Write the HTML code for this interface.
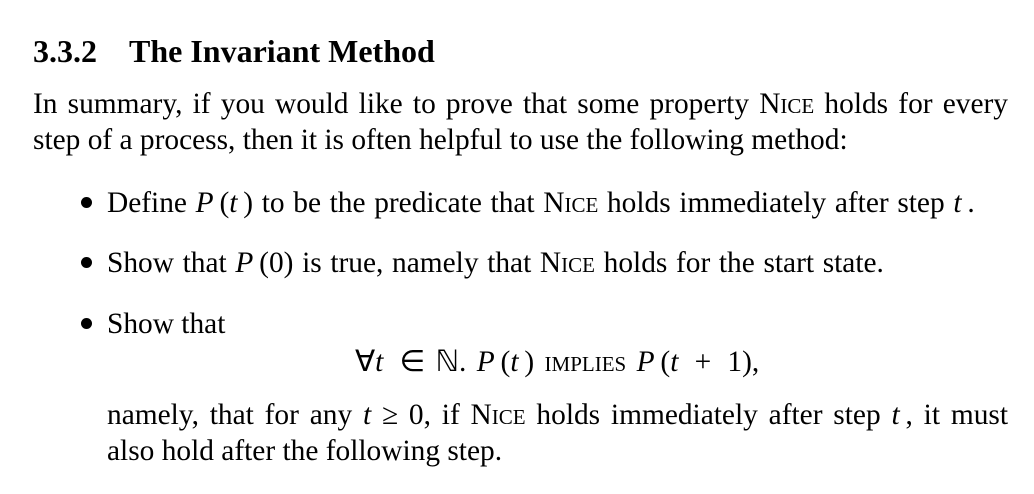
<!DOCTYPE html>
<html><head><meta charset="utf-8"><style>
body{margin:0;width:1034px;height:494px;background:#fff;overflow:hidden;position:relative;font-family:"Liberation Serif",serif;color:#000}
.l{position:absolute;font-size:29.4px;line-height:29px;white-space:nowrap}
.j{text-align:justify;text-align-last:justify;white-space:normal}
.sc{font-variant:small-caps}
i{font-style:italic}
.w{word-spacing:1.3px}
.b{position:absolute;width:11px;height:11px;border-radius:50%;background:#000}
</style></head><body>
<div class="l" style="left:33px;top:35px;font-size:32px;line-height:32px;font-weight:bold">3.3.2&nbsp;&nbsp;&nbsp;&nbsp;The Invariant Method</div>
<div class="l j" style="left:33px;top:90px;width:975px">In summary, if you would like to prove that some property <span class="sc">Nice</span> holds for every</div>
<div class="l" style="left:33px;top:126px">step of a process, then it is often helpful to use the following method:</div>
<div class="b" style="left:81px;top:197px"></div>
<div class="l w" style="left:107px;top:189px">Define <i>P</i>&#8201;(<i>t</i>&#8201;) to be the predicate that <span class="sc">Nice</span> holds immediately after step <i>t</i>&#8201;.</div>
<div class="b" style="left:81px;top:257px"></div>
<div class="l w" style="left:107px;top:249px">Show that <i>P</i>&#8201;(0) is true, namely that <span class="sc">Nice</span> holds for the start state.</div>
<div class="b" style="left:81px;top:318px"></div>
<div class="l" style="left:107px;top:310px">Show that</div>
<div class="l" style="left:355px;top:348px;word-spacing:3px">∀<i>t</i>&#8201; ∈ ℕ. <i>P</i>&#8201;(<i>t</i>&#8201;) <span class="sc">implies</span> <i>P</i>&#8201;(<i>t</i> &#8201;+&#8201; 1),</div>
<div class="l j" style="left:107px;top:401px;width:901px">namely, that for any <i>t</i> ≥ 0, if <span class="sc">Nice</span> holds immediately after step <i>t</i>&#8201;, it must</div>
<div class="l" style="left:107px;top:437px">also hold after the following step.</div>
</body></html>
